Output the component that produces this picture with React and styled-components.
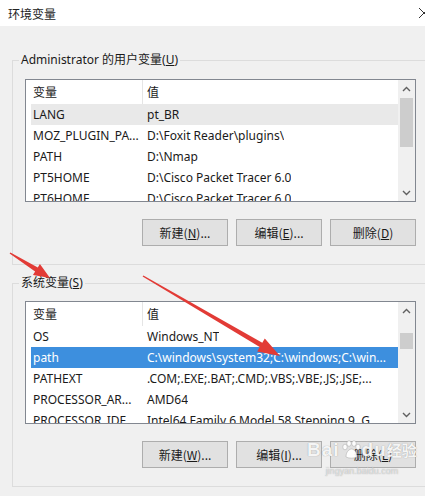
import React from "react";
import styled, { createGlobalStyle } from "styled-components";

const GlobalStyle = createGlobalStyle`
  body {
    margin: 0;
    background: #f0f0f0;
  }
`;

const Window = styled.div`
  position: relative;
  width: 425px;
  height: 496px;
  overflow: hidden;
  background: #f0f0f0;
  font-family: "Noto Sans", "Noto Sans CJK SC", sans-serif;
  font-size: 12px;
  color: #1a1a1a;
`;

const TitleBar = styled.div`
  height: 26px;
  background: #fff;
  display: flex;
  align-items: center;
  justify-content: space-between;
  padding-left: 8px;
  font-family: "Noto Sans CJK SC", sans-serif;
  font-size: 12px;
  color: #222;
`;

const Body = styled.div`
  display: flex;
  flex-direction: column;
  gap: 10px;
  padding: 26px 0 0 12px;
`;

const Group = styled.fieldset`
  box-sizing: border-box;
  width: 416px;
  margin: 0;
  padding: 0;
  border: 1px solid #dcdcdc;
  min-width: 0;
`;

const Legend = styled.legend`
  margin-left: 6px;
  padding: 0 2px;
  font-size: 12px;
  line-height: 16px;
  color: #1a1a1a;
`;

const Content = styled.div`
  padding: ${(p) => p.$top}px 11px 18px 12px;
`;

const List = styled.div`
  box-sizing: border-box;
  height: 123px;
  border: 1px solid #828790;
  background: #fff;
  display: flex;
  overflow: hidden;
`;

const Table = styled.div`
  flex: 1;
  padding-left: 5px;
  overflow: hidden;
`;

const Row = styled.div`
  display: flex;
  height: ${(p) => (p.$head ? 24 : 21)}px;
  align-items: center;
  white-space: nowrap;
  background: ${(p) => (p.$selected ? "#3d8fde" : p.$hover ? "#e9e9e9" : "transparent")};
  color: ${(p) => (p.$selected ? "#fff" : "#1a1a1a")};
`;

const NameCell = styled.div`
  box-sizing: border-box;
  width: 112px;
  flex: none;
  padding-left: 2px;
  height: 100%;
  display: flex;
  align-items: center;
  border-right: 1px solid ${(p) => (p.$head ? "#e5e5e5" : "transparent")};
`;

const ValueCell = styled.div`
  padding-left: 4px;
  overflow: hidden;
`;

const ScrollBar = styled.div`
  width: 17px;
  flex: none;
  background: #f0f0f0;
  display: flex;
  flex-direction: column;
`;

const ScrollArrow = styled.div`
  height: 17px;
  flex: none;
  display: flex;
  align-items: center;
  justify-content: center;
`;

const Track = styled.div`
  flex: 1;
`;

const Thumb = styled.div`
  margin: 0 2px;
  background: #cdcdcd;
`;

const ButtonRow = styled.div`
  display: flex;
  justify-content: flex-end;
  gap: 8px;
  margin-top: 17px;
`;

const Button = styled.div`
  box-sizing: border-box;
  width: 86px;
  height: 27px;
  background: #e1e1e1;
  border: 1px solid #adadad;
  display: flex;
  align-items: center;
  justify-content: center;
  font-family: "Noto Sans CJK SC", sans-serif;
  font-size: 12px;
  color: #1a1a1a;
`;

const Key = styled.span`
  text-decoration: underline;
`;

const Overlay = styled.svg`
  position: absolute;
  left: 0;
  top: 0;
  pointer-events: none;
`;

const Watermark = styled.div`
  position: absolute;
  left: 307px;
  top: 440px;
  display: flex;
  flex-direction: column;
  align-items: center;
  color: rgba(255, 255, 255, 0.92);
  text-shadow: 0 0 1px rgba(110, 110, 110, 0.7);
  pointer-events: none;
`;

const Brand = styled.div`
  display: flex;
  align-items: flex-end;
  font-family: "Liberation Sans", sans-serif;
  font-weight: bold;
  font-size: 19px;
  line-height: 20px;
  letter-spacing: 1px;
`;

const BrandCn = styled.span`
  font-family: "Noto Sans CJK SC", sans-serif;
  font-size: 15px;
  letter-spacing: 0;
`;

const Site = styled.div`
  font-family: "Liberation Sans", sans-serif;
  font-size: 9px;
  margin-top: 6px;
  color: rgba(255, 255, 255, 0.6);
`;

const Chevron = ({ up }) => (
  <svg width="9" height="6" viewBox="0 0 9 6">
    <polyline
      points={up ? "1,5 4.5,1.5 8,5" : "1,1 4.5,4.5 8,1"}
      fill="none"
      stroke="#606060"
      strokeWidth="1.4"
    />
  </svg>
);

const Label = ({ text, k, tail = "" }) => (
  <>
    {text}(<Key>{k}</Key>){tail}
  </>
);

const VarList = ({ rows, thumbTop, thumbHeight }) => (
  <List>
    <Table>
      <Row $head>
        <NameCell $head>变量</NameCell>
        <ValueCell>值</ValueCell>
      </Row>
      {rows.map((r) => (
        <Row key={r.name} $hover={r.hover} $selected={r.selected}>
          <NameCell>{r.name}</NameCell>
          <ValueCell>{r.value}</ValueCell>
        </Row>
      ))}
    </Table>
    <ScrollBar>
      <ScrollArrow>
        <Chevron up />
      </ScrollArrow>
      <Track>
        <Thumb style={{ marginTop: thumbTop, height: thumbHeight }} />
      </Track>
      <ScrollArrow>
        <Chevron />
      </ScrollArrow>
    </ScrollBar>
  </List>
);

const arrowPoints = (x1, y1, x2, y2, headLen, headW, tailW, neckW) => {
  const dx = x2 - x1;
  const dy = y2 - y1;
  const len = Math.hypot(dx, dy);
  const ux = dx / len;
  const uy = dy / len;
  const nx = -uy;
  const ny = ux;
  const cx = x2 - ux * headLen;
  const cy = y2 - uy * headLen;
  const p = (x, y, w) => [x + nx * w, y + ny * w];
  const pts = [
    p(x1, y1, tailW / 2),
    p(cx, cy, neckW / 2),
    p(cx, cy, headW / 2),
    [x2, y2],
    p(cx, cy, -headW / 2),
    p(cx, cy, -neckW / 2),
    p(x1, y1, -tailW / 2),
  ];
  return pts.map((q) => q.map((v) => v.toFixed(1)).join(",")).join(" ");
};

const userVars = [
  { name: "LANG", value: "pt_BR", hover: true },
  { name: "MOZ_PLUGIN_PA...", value: "D:\\Foxit Reader\\plugins\\" },
  { name: "PATH", value: "D:\\Nmap" },
  { name: "PT5HOME", value: "D:\\Cisco Packet Tracer 6.0" },
  { name: "PT6HOME", value: "D:\\Cisco Packet Tracer 6.0" },
];

const sysVars = [
  { name: "OS", value: "Windows_NT" },
  { name: "path", value: "C:\\windows\\system32;C:\\windows;C:\\win...", selected: true },
  { name: "PATHEXT", value: ".COM;.EXE;.BAT;.CMD;.VBS;.VBE;.JS;.JSE;..." },
  { name: "PROCESSOR_AR...", value: "AMD64" },
  { name: "PROCESSOR_IDE...", value: "Intel64 Family 6 Model 58 Stepping 9, G..." },
];

export default function App() {
  return (
    <Window>
      <GlobalStyle />
      <TitleBar>
        <span>环境变量</span>
        <svg width="8" height="12" viewBox="0 0 8 12">
          <path d="M2 1 L12 11 M12 1 L2 11" stroke="#333" strokeWidth="1" />
        </svg>
      </TitleBar>
      <Body>
        <Group>
          <Legend>
            Administrator 的用户变量(<Key>U</Key>)
          </Legend>
          <Content $top={11}>
            <VarList rows={userVars} thumbTop={1} thumbHeight={49} />
            <ButtonRow>
              <Button>
                <Label text="新建" k="N" tail="..." />
              </Button>
              <Button>
                <Label text="编辑" k="E" tail="..." />
              </Button>
              <Button>
                <Label text="删除" k="D" />
              </Button>
            </ButtonRow>
          </Content>
        </Group>
        <Group>
          <Legend>
            系统变量(<Key>S</Key>)
          </Legend>
          <Content $top={10}>
            <VarList rows={sysVars} thumbTop={14} thumbHeight={16} />
            <ButtonRow>
              <Button>
                <Label text="新建" k="W" tail="..." />
              </Button>
              <Button>
                <Label text="编辑" k="I" tail="..." />
              </Button>
              <Button>
                <Label text="删除" k="L" />
              </Button>
            </ButtonRow>
          </Content>
        </Group>
      </Body>
      <Overlay width="425" height="496">
        <polygon points={arrowPoints(10, 253, 50, 278, 16, 13, 1.5, 5)} fill="#e23b36" />
        <polygon points={arrowPoints(143, 276, 280, 356, 22, 15, 1.5, 5)} fill="#e23b36" />
      </Overlay>
      <Watermark>
        <Brand>
          Bai
          <svg width="22" height="20" viewBox="0 0 22 20">
            <g fill="rgba(255,255,255,0.92)" stroke="rgba(120,120,120,0.5)" strokeWidth="0.6">
              <ellipse cx="5" cy="7" rx="2.2" ry="2.8" />
              <ellipse cx="9" cy="3.5" rx="2.2" ry="2.8" />
              <ellipse cx="14" cy="3.5" rx="2.2" ry="2.8" />
              <ellipse cx="18" cy="7" rx="2.2" ry="2.8" />
              <path d="M6 17 C6 11 10 9 11.5 9 C13 9 17 11 17 17 C14 18.5 9 18.5 6 17 Z" />
            </g>
          </svg>
          du<BrandCn>经验</BrandCn>
        </Brand>
        <Site>jingyan.baidu.com</Site>
      </Watermark>
    </Window>
  );
}
